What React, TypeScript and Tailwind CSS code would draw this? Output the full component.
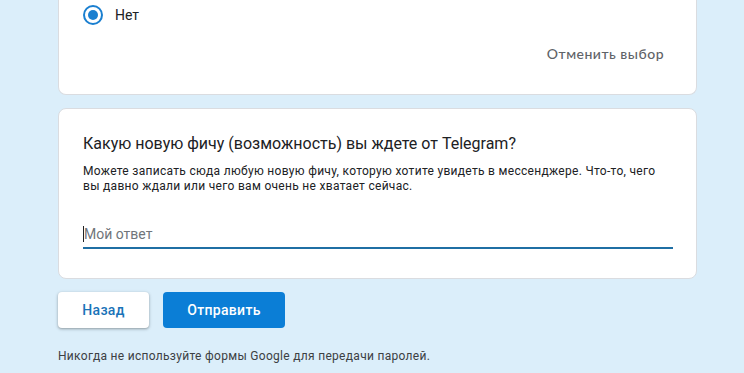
export default function App() {
	return (
		<div className="min-h-[373px] w-[744px] bg-[#dbeefa] font-['Roboto',sans-serif] text-[#202124]">
			<div className="flex w-[639px] flex-col pl-[58px] box-content">
				{/* первая карточка, верх обрезан */}
				<div className="flex h-[95px] flex-col rounded-b-lg border border-t-0 border-[#dadce0] bg-white px-6">
					<div className="mt-[3px] flex h-6 items-center gap-3">
						<span className="flex h-5 w-5 items-center justify-center rounded-full border-2 border-[#1a7fd0]">
							<span className="h-[10px] w-[10px] rounded-full bg-[#1a7fd0]" />
						</span>
						<span className="text-sm">Нет</span>
					</div>
					<div className="mt-[16px] flex justify-end pr-[8px]">
						<span className="font-['Lato',sans-serif] text-[14px] font-medium tracking-[0.5px] text-[#5f6368]">
							Отменить выбор
						</span>
					</div>
				</div>

				<div className="mt-[13px] flex h-[171px] flex-col rounded-lg border border-[#dadce0] bg-white px-6 pt-[23px]">
					<div className="text-base leading-6">Какую новую фичу (возможность) вы ждете от Telegram?</div>
					<div className="mt-[8px] w-[583px] text-xs leading-[15px] tracking-[0.3px]">
						Можете записать сюда любую новую фичу, которую хотите увидеть в мессенджере. Что-то, чего вы давно ждали
						или чего вам очень не хватает сейчас.
					</div>
					<div className="mt-[28px] w-[590px] border-b-2 border-[#1f6fa4] pb-[1px]">
						<span className="border-l border-[#202124] text-sm leading-5 text-[#70757a]">Мой ответ</span>
					</div>
				</div>

				<div className="mt-[13px] flex gap-[14px]">
					<button className="h-9 w-[91px] rounded bg-white text-[14px] font-medium tracking-[0.3px] text-[#1a73b8] shadow-[0_1px_2px_rgba(60,64,67,0.3),0_1px_3px_1px_rgba(60,64,67,0.15)]">
						Назад
					</button>
					<button className="h-9 w-[122px] rounded bg-[#0b7ed6] text-[14px] font-medium tracking-[0.3px] text-white">
						Отправить
					</button>
				</div>

				<div className="mt-[20px] text-xs tracking-[0.3px] text-[#3c4043]">
					Никогда не используйте формы Google для передачи паролей.
				</div>
			</div>
		</div>
	);
}
